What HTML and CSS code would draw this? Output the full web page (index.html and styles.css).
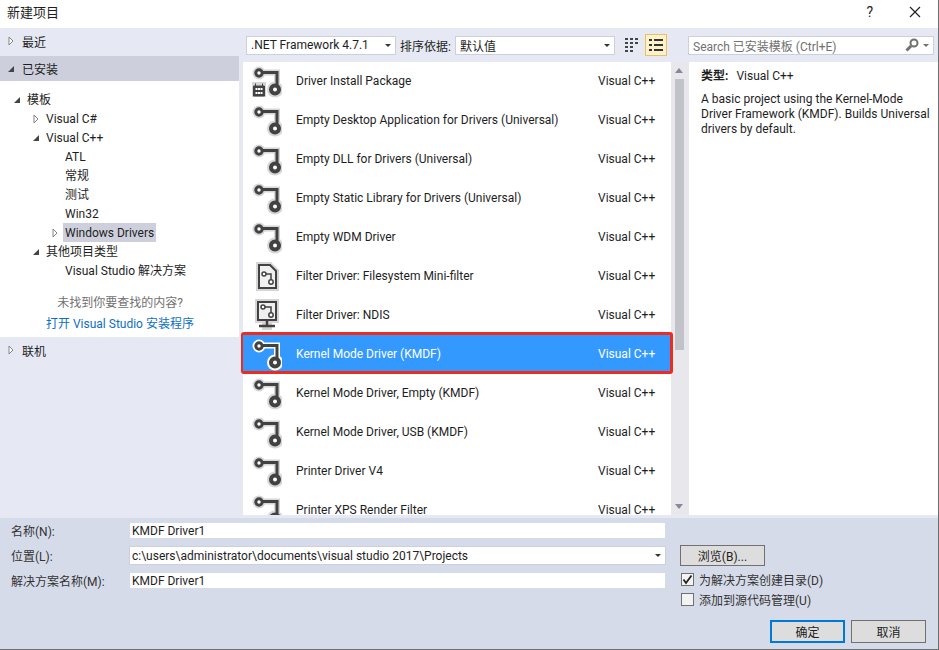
FILE: index.html
```html
<!DOCTYPE html>
<html lang="zh-CN">
<head>
    <meta charset="UTF-8">
    <title>新建项目</title>
    <link rel="stylesheet" href="styles.css">
</head>
<body>
    <svg class="defs" width="0" height="0">
        <symbol id="driver" viewBox="0 0 30 34">
            <path d="M7 7.500H25V22" fill="none" stroke="currentColor" stroke-width="6"/>
            <circle cx="7" cy="8" r="6.500" fill="currentColor"/>
            <circle cx="23" cy="24.500" r="8" fill="currentColor"/>
            <path d="M9 7.500H25V20" fill="none" stroke="#424242" stroke-width="3"/>
            <circle cx="7" cy="8" r="3.200" fill="#fff" stroke="#424242" stroke-width="3"/>
            <circle cx="23" cy="24.500" r="4" fill="#fff" stroke="#424242" stroke-width="4"/>
        </symbol>
        <symbol id="open" viewBox="0 0 8 10"><path d="M2 1V9L6 5Z" fill="#fff" stroke="#848484"/></symbol>
        <symbol id="shut" viewBox="0 0 8 10"><path d="M7 2V8H1Z" fill="#444"/></symbol>
    </svg>

    <div class="dialog">
        <header class="titlebar">
            <span class="title">新建项目</span>
            <span class="help">?</span>
            <svg class="close" width="12" height="12" viewBox="0 0 12 12"><path d="M1 1L11 11M11 1L1 11" stroke="#222" stroke-width="1.200"/></svg>
        </header>

        <div class="main">
            <nav class="sidebar">
                <div class="section first"><svg class="arrow"><use href="#open"/></svg>最近</div>
                <div class="section active"><svg class="arrow"><use href="#shut"/></svg>已安装</div>
                <div class="tree">
                    <div class="node level-1"><svg class="arrow"><use href="#shut"/></svg><span>模板</span></div>
                    <div class="node level-2"><svg class="arrow"><use href="#open"/></svg><span>Visual C#</span></div>
                    <div class="node level-2"><svg class="arrow"><use href="#shut"/></svg><span>Visual C++</span></div>
                    <div class="node level-3"><span>ATL</span></div>
                    <div class="node level-3"><span>常规</span></div>
                    <div class="node level-3"><span>测试</span></div>
                    <div class="node level-3"><span>Win32</span></div>
                    <div class="node level-3 current"><svg class="arrow"><use href="#open"/></svg><span>Windows Drivers</span></div>
                    <div class="node level-2"><svg class="arrow"><use href="#shut"/></svg><span>其他项目类型</span></div>
                    <div class="node level-3"><span>Visual Studio 解决方案</span></div>
                    <p class="hint">未找到你要查找的内容?</p>
                    <a class="install-link">打开 Visual Studio 安装程序</a>
                </div>
                <div class="section online"><svg class="arrow"><use href="#open"/></svg>联机</div>
            </nav>

            <div class="content">
                <div class="toolbar">
                    <div class="combo framework">.NET Framework 4.7.1<i class="caret"></i></div>
                    <span class="sort-label">排序依据:</span>
                    <div class="combo sort">默认值<i class="caret"></i></div>
                    <svg class="view-grid" width="13" height="15" viewBox="0 0 13 15">
                        <path d="M0 1H3M5 1H8M10 1H13M0 5H3M5 5H8M10 5H13M0 9H3M5 9H8M0 13H3M5 13H8" stroke="#444" stroke-width="2" fill="none"/>
                    </svg>
                    <div class="view-list">
                        <svg width="14" height="14" viewBox="0 0 14 14"><path d="M0 2H3M5 2H14M0 7H3M5 7H14M0 12H3M5 12H14" stroke="#333" stroke-width="2"/></svg>
                    </div>
                    <div class="search">
                        <span>Search 已安装模板 (Ctrl+E)</span>
                        <svg width="14" height="14" viewBox="0 0 14 14"><circle cx="9" cy="5" r="3.500" fill="none" stroke="#717171" stroke-width="2"/><path d="M6 8L1.500 12.500" stroke="#717171" stroke-width="3"/></svg>
                        <i class="caret"></i>
                    </div>
                </div>

                <div class="panes">
                    <div class="list">
                        <div class="row">
                            <svg class="icon" viewBox="0 0 30 34">
                                <use href="#driver" width="30" height="34"/>
                                <path d="M0 17H14V32H0Z" fill="#d6d6d6"/>
                                <path d="M1.500 21H12.500V31H1.500ZM3.500 18.500V21M10.500 18.500V21" fill="#424242" stroke="#424242"/>
                                <path d="M3.500 23H5.500V25H3.500ZM6 23H8V25H6ZM8.500 23H10.500V25H8.500ZM3.500 27H5.500V29H3.500ZM6 27H8V29H6ZM8.500 27H10.500V29H8.500Z" fill="#fff"/>
                            </svg>
                            <span class="name">Driver Install Package</span><span class="lang">Visual C++</span>
                        </div>
                        <div class="row">
                            <svg class="icon"><use href="#driver"/></svg>
                            <span class="name">Empty Desktop Application for Drivers (Universal)</span><span class="lang">Visual C++</span>
                        </div>
                        <div class="row">
                            <svg class="icon"><use href="#driver"/></svg>
                            <span class="name">Empty DLL for Drivers (Universal)</span><span class="lang">Visual C++</span>
                        </div>
                        <div class="row">
                            <svg class="icon"><use href="#driver"/></svg>
                            <span class="name">Empty Static Library for Drivers (Universal)</span><span class="lang">Visual C++</span>
                        </div>
                        <div class="row">
                            <svg class="icon"><use href="#driver"/></svg>
                            <span class="name">Empty WDM Driver</span><span class="lang">Visual C++</span>
                        </div>
                        <div class="row">
                            <svg class="icon" viewBox="0 0 30 34">
                                <path d="M4 2H19L27 10V31H4Z" fill="#d6d6d6"/>
                                <path d="M7 5H18L24 11V28H7Z" fill="#f0f0f0" stroke="#424242" stroke-width="2"/>
                                <path d="M12 14H19V22" fill="none" stroke="#424242" stroke-width="1.500"/>
                                <circle cx="12" cy="14" r="2" fill="#fff" stroke="#424242" stroke-width="1.500"/>
                                <circle cx="19" cy="22" r="2.200" fill="#fff" stroke="#424242" stroke-width="1.500"/>
                            </svg>
                            <span class="name">Filter Driver: Filesystem Mini-filter</span><span class="lang">Visual C++</span>
                        </div>
                        <div class="row">
                            <svg class="icon" viewBox="0 0 30 34">
                                <path d="M3 0H27V24H20V31H10V24H3Z" fill="#d6d6d6"/>
                                <path d="M6 3H24V21H6Z" fill="#f0f0f0" stroke="#424242" stroke-width="2"/>
                                <path d="M11 8H19V16" fill="none" stroke="#424242" stroke-width="1.500"/>
                                <circle cx="11" cy="8" r="2" fill="#fff" stroke="#424242" stroke-width="1.500"/>
                                <circle cx="19" cy="16" r="2.200" fill="#fff" stroke="#424242" stroke-width="1.500"/>
                                <path d="M15 22V28M7 27H23" stroke="#424242" stroke-width="2.500"/>
                            </svg>
                            <span class="name">Filter Driver: NDIS</span><span class="lang">Visual C++</span>
                        </div>
                        <div class="row selected">
                            <svg class="icon"><use href="#driver"/></svg>
                            <span class="name">Kernel Mode Driver (KMDF)</span><span class="lang">Visual C++</span>
                        </div>
                        <div class="row">
                            <svg class="icon"><use href="#driver"/></svg>
                            <span class="name">Kernel Mode Driver, Empty (KMDF)</span><span class="lang">Visual C++</span>
                        </div>
                        <div class="row">
                            <svg class="icon"><use href="#driver"/></svg>
                            <span class="name">Kernel Mode Driver, USB (KMDF)</span><span class="lang">Visual C++</span>
                        </div>
                        <div class="row">
                            <svg class="icon"><use href="#driver"/></svg>
                            <span class="name">Printer Driver V4</span><span class="lang">Visual C++</span>
                        </div>
                        <div class="row">
                            <svg class="icon"><use href="#driver"/></svg>
                            <span class="name">Printer XPS Render Filter</span><span class="lang">Visual C++</span>
                        </div>
                    </div>

                    <div class="scrollbar">
                        <i class="up"></i>
                        <div class="thumb"></div>
                        <i class="down"></i>
                    </div>

                    <aside class="details">
                        <p class="type"><b>类型:</b>Visual C++</p>
                        <p class="desc">A basic project using the Kernel-Mode Driver Framework (KMDF). Builds Universal drivers by default.</p>
                    </aside>
                </div>
            </div>
        </div>

        <footer class="bottom">
            <div class="fields">
                <label>名称(N):</label>
                <div class="input">KMDF Driver1</div>
                <label>位置(L):</label>
                <div class="input location">c:\users\administrator\documents\visual studio 2017\Projects<i class="caret"></i></div>
                <label>解决方案名称(M):</label>
                <div class="input">KMDF Driver1</div>
            </div>
            <div class="options">
                <button class="btn browse">浏览(B)...</button>
                <div class="check">
                    <span class="box"><svg width="11" height="11" viewBox="0 0 11 11"><path d="M1.500 5.500L4 9L9.500 1.500" fill="none" stroke="#222" stroke-width="1.800"/></svg></span>
                    为解决方案创建目录(D)
                </div>
                <div class="check"><span class="box"></span>添加到源代码管理(U)</div>
                <div class="actions">
                    <button class="btn primary">确定</button>
                    <button class="btn">取消</button>
                </div>
            </div>
        </footer>
    </div>
</body>
</html>
```

FILE: styles.css
```css
* {
    box-sizing: border-box;
}

html, body {
    margin: 0;
    height: 100%;
}

body {
    font-family: Roboto, "Noto Sans CJK SC", sans-serif;
    font-size: 12px;
    color: #1e1e1e;
    overflow: hidden;
}

.defs {
    position: absolute;
}

.dialog {
    width: 939px;
    height: 650px;
    display: flex;
    flex-direction: column;
    background-color: #fff;
    border-right: 1px solid #6e6e6e;
    border-bottom: 1px solid #6e6e6e;
}

.titlebar {
    height: 28px;
    flex: none;
    display: flex;
    align-items: center;
    padding: 0 17px 4px 7px;
}

.title {
    font-size: 13px;
    flex: 1;
    padding-bottom: 2px;
}

.help {
    font-size: 14px;
    margin-right: 36px;
}

.main {
    flex: 1;
    min-height: 0;
    display: flex;
    background-color: #e6e9f4;
}

/* left tree */
.sidebar {
    width: 239px;
    flex: none;
}

.section {
    height: 28px;
    display: flex;
    align-items: center;
    padding-left: 7px;
}

.section .arrow {
    margin-right: 7px;
}

.section.first {
    padding-bottom: 2px;
}

.section.active {
    height: 25px;
    background-color: #cdd0dc;
}

.section.online {
    padding-bottom: 2px;
}

.arrow {
    width: 8px;
    height: 10px;
    flex: none;
}

.tree {
    height: 256px;
    background-color: #fff;
    padding-top: 9px;
}

.node {
    height: 19px;
    display: flex;
    align-items: center;
}

.node span {
    padding: 2px 2px 0;
    height: 19px;
    line-height: 17px;
}

.node .arrow {
    margin-left: -12px;
    margin-right: 4px;
}

.level-1 {
    padding-left: 25px;
}

.level-2 {
    padding-left: 44px;
}

.level-3 {
    padding-left: 63px;
}

.current span {
    background-color: #cdd0dc;
}

.hint {
    margin: 14px 0 0;
    text-align: center;
    color: #717171;
    padding-left: 1px;
    line-height: 19px;
}

.install-link {
    display: block;
    margin-top: 2px;
    padding-left: 46px;
    color: #0e70c0;
    line-height: 19px;
}

/* toolbar and list */
.content {
    flex: 1;
    min-width: 0;
    display: flex;
    flex-direction: column;
}

.toolbar {
    height: 34px;
    flex: none;
    display: flex;
    align-items: center;
    padding-left: 7px;
}

.combo, .search {
    height: 19px;
    position: relative;
    display: flex;
    align-items: center;
    background-color: #fff;
    border: 1px solid #ccd0dc;
    padding-left: 4px;
}

.caret {
    position: absolute;
    right: 4px;
    top: 7px;
    border-style: solid;
    border-width: 3px 3px 0;
    border-color: #333 transparent transparent;
}

.framework {
    width: 150px;
}

.sort-label {
    margin-left: 4px;
    width: 55px;
}

.sort {
    width: 160px;
}

.view-grid {
    margin-left: 10px;
}

.view-list {
    width: 22px;
    height: 22px;
    margin-left: 7px;
    display: flex;
    align-items: center;
    justify-content: center;
    background-color: #fff1c8;
    border: 1px solid #e5c365;
}

.search {
    width: 246px;
    margin-left: 21px;
    color: #717171;
}

.search span {
    flex: 1;
}

.search svg {
    margin-right: 14px;
}

.search .caret {
    border-top-color: #717171;
}

.panes {
    flex: 1;
    min-height: 0;
    display: flex;
    padding-left: 4px;
}

.list {
    width: 428px;
    flex: none;
    background-color: #fff;
    position: relative;
    z-index: 1;
    clip-path: inset(-3px -3px 0 -3px);
}

.row {
    height: 39px;
    display: flex;
    align-items: center;
}

.row .icon {
    width: 30px;
    height: 34px;
    margin: 0 14px 0 9px;
    color: #d6d6d6;
    flex: none;
}

.row .name {
    flex: 1;
    padding-bottom: 2px;
}

.row .lang {
    width: 73px;
    padding-bottom: 2px;
}

.selected {
    background-color: #3399ff;
    color: #fff;
    position: relative;
}

.selected .icon {
    color: #fff;
}

.selected::after {
    content: "";
    position: absolute;
    top: -3px;
    left: -2px;
    right: -2px;
    bottom: 0;
    border: 3px solid #f02a1d;
    border-left-width: 2px;
    border-radius: 3px;
}

.scrollbar {
    width: 18px;
    flex: none;
    background-color: #e8e8ec;
    position: relative;
}

.thumb {
    position: absolute;
    left: 4px;
    top: 17px;
    width: 9px;
    height: 271px;
    background-color: #c2c3c9;
}

.up, .down {
    position: absolute;
    left: 4px;
    border-style: solid;
    border-color: transparent;
}

.up {
    top: 6px;
    border-width: 0 4.500px 5px;
    border-bottom-color: #868999;
}

.down {
    bottom: 6px;
    border-width: 5px 4.500px 0;
    border-top-color: #868999;
}

.details {
    flex: 1;
    background-color: #fff;
    padding: 7px 5px 0 12px;
}

.details p {
    margin: 0;
    line-height: 15px;
}

.details b {
    margin-right: 8px;
}

.details .type {
    margin-bottom: 8px;
}

/* bottom form */
.bottom {
    height: 134px;
    flex: none;
    display: flex;
    background-color: #d6dbe9;
    padding-top: 5px;
    border-top: 3px solid #e6e9f4;
}

.fields {
    width: 666px;
    display: grid;
    grid-template-columns: 130px 1fr;
    grid-auto-rows: 15px;
    row-gap: 10px;
    align-items: center;
    padding-left: 11px;
    padding-right: 1px;
}

.fields label {
    white-space: nowrap;
    color: #333;
}

.input {
    height: 15px;
    line-height: 17px;
    background-color: #fff;
    padding-left: 2px;
    margin-left: -11px;
}

.location {
    position: relative;
    height: 19px;
    line-height: 19px;
    margin: -2px -1px -2px -12px;
    border: 1px solid #ccd0dc;
    padding-left: 2px;
}

.options {
    margin-left: 14px;
    padding-top: 22px;
    width: 246px;
}

.btn {
    font: inherit;
    color: #1e1e1e;
    width: 75px;
    height: 23px;
    padding: 0;
    background-color: #dddddd;
    border: 1px solid #707070;
}

.browse {
    width: 85px;
    height: 21px;
    display: block;
    margin-bottom: 3px;
}

.check {
    height: 20px;
    display: flex;
    align-items: center;
    gap: 5px;
    padding-left: 1px;
    color: #333;
}

.box {
    width: 13px;
    height: 13px;
    display: flex;
    align-items: center;
    justify-content: center;
    background-color: #f3f3f3;
    border: 1px solid #707070;
}

.actions {
    display: flex;
    gap: 6px;
    margin-top: 11px;
    margin-left: 90px;
}

.primary {
    border-color: #0078d7;
    box-shadow: inset 0 0 0 1px #0078d7;
}
```
